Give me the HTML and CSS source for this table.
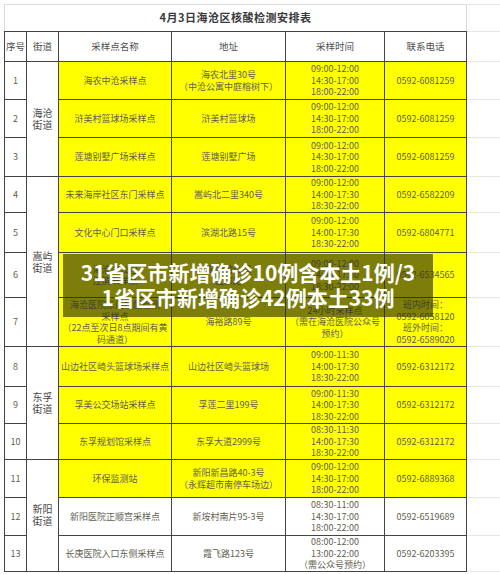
FILE: index.html
```html
<!DOCTYPE html>
<html lang="zh">
<head>
<meta charset="utf-8">
<link rel="stylesheet" href="styles.css">
</head>
<body>
<div class="page">
<table class="sheet">
<colgroup>
<col class="c-no"><col class="c-st"><col class="c-name"><col class="c-addr"><col class="c-time"><col class="c-tel"><col class="c-extra">
</colgroup>
<tr class="r-title"><td colspan="6" class="title">4月3日海沧区核酸检测安排表</td><td class="extra"></td></tr>
<tr class="r-head"><td>序号</td><td>街道</td><td>采样点名称</td><td>地址</td><td>采样时间</td><td>联系电话</td><td class="extra"></td></tr>
<tr class="h38"><td>1</td><td rowspan="3" class="st">海沧<br>街道</td><td class="y">海农中沧采样点</td><td class="y">海农北里30号<br>（中沧公寓中庭榕树下）</td><td class="y">09:00-12:00<br>14:30-17:00<br>18:00-22:00</td><td class="y">0592-6081259</td><td class="extra"></td></tr>
<tr class="h38"><td>2</td><td class="y">浒美村篮球场采样点</td><td class="y">浒美村篮球场</td><td class="y">09:00-12:00<br>14:30-17:00<br>18:00-22:00</td><td class="y">0592-6081259</td><td class="extra"></td></tr>
<tr class="h39"><td>3</td><td class="y">莲塘别墅广场采样点</td><td class="y">莲塘别墅广场</td><td class="y">09:00-12:00<br>14:30-17:00<br>18:00-22:00</td><td class="y">0592-6081259</td><td class="extra"></td></tr>
<tr class="h36"><td>4</td><td rowspan="4" class="st">嵩屿<br>街道</td><td class="y">未来海岸社区东门采样点</td><td class="y">嵩屿北二里340号</td><td class="y">09:00-12:00<br>14:00-17:30<br>18:30-22:00</td><td class="y">0592-6582209</td><td class="extra"></td></tr>
<tr class="h40"><td>5</td><td class="y">文化中心门口采样点</td><td class="y">滨湖北路15号</td><td class="y">09:00-12:00<br>14:00-17:30<br>18:30-22:00</td><td class="y">0592-6804771</td><td class="extra"></td></tr>
<tr class="h45"><td>6</td><td class="y">海沧湾公园<br>江滨采样点</td><td class="y">海沧湾公园<br>江滨路</td><td class="y">09:00-12:00<br>14:00-17:30<br>18:30-22:00</td><td class="y">0592-6534565</td><td class="extra"></td></tr>
<tr class="h49"><td>7</td><td class="y">海沧医院东门核酸检测<br>采样点<br>（22点至次日8点期间有黄<br>码通道）</td><td class="y">海裕路89号</td><td class="y">24小时采样点<br>（需在海沧医院公众号<br>预约）</td><td class="y">班内时间：<br>0592-6058120<br>班外时间：<br>0592-6589020</td><td class="extra"></td></tr>
<tr class="h40"><td>8</td><td rowspan="3" class="st">东孚<br>街道</td><td class="y">山边社区崎头篮球场采样点</td><td class="y">山边社区崎头篮球场</td><td class="y">09:00-11:30<br>14:00-17:30<br>18:30-22:00</td><td class="y">0592-6312172</td><td class="extra"></td></tr>
<tr class="h37"><td>9</td><td class="y">孚美公交场站采样点</td><td class="y">孚莲二里199号</td><td class="y">09:00-11:30<br>14:00-17:30<br>18:30-22:00</td><td class="y">0592-6312172</td><td class="extra"></td></tr>
<tr class="h36"><td>10</td><td class="y">东孚规划馆采样点</td><td class="y">东孚大道2999号</td><td class="y">08:30-11:30<br>14:00-17:30<br>18:30-22:00</td><td class="y">0592-6312172</td><td class="extra"></td></tr>
<tr class="h38"><td>11</td><td rowspan="3" class="st">新阳<br>街道</td><td class="y">环保监测站</td><td class="y">新阳新昌路40-3号<br>（永辉超市南停车场边）</td><td class="y">09:00-12:00<br>14:30-17:00<br>18:00-22:00</td><td class="y">0592-6889368</td><td class="extra"></td></tr>
<tr class="h38"><td>12</td><td>新阳医院正顺宫采样点</td><td>新垵村南片95-3号</td><td>08:30-11:00<br>14:30-17:00<br>18:00-22:00</td><td>0592-6519689</td><td class="extra"></td></tr>
<tr class="h35"><td>13</td><td>长庚医院入口东侧采样点</td><td>霞飞路123号</td><td>08:00-12:00<br>13:00-22:00<br>（需公众号预约）</td><td>0592-6203395</td><td class="extra"></td></tr>
</table>
<div class="banner">31省区市新增确诊10例含本土1例/3<br>1省区市新增确诊42例本土33例</div>
</div>
</body>
</html>
```
FILE: styles.css
```css
html, body {
  margin: 0;
  padding: 0;
  background: #fff;
}
.page {
  position: relative;
  width: 500px;
  height: 574px;
  padding: 4px 0 0 4px;
  box-sizing: border-box;
  overflow: hidden;
  font-family: "Noto Sans CJK SC", "Noto Sans", sans-serif;
}
.sheet {
  border-collapse: collapse;
  table-layout: fixed;
  width: 497px;
}
.c-no { width: 22px; }
.c-st { width: 32px; }
.c-name { width: 113px; }
.c-addr { width: 114px; }
.c-time { width: 99px; }
.c-tel { width: 82px; }
.c-extra { width: 35px; }
.sheet td {
  border: 1px solid #444;
  padding: 0;
  text-align: center;
  vertical-align: middle;
  font-size: 9px;
  line-height: 11.5px;
  color: #5f5f50;
  white-space: nowrap;
  overflow: hidden;
}
.sheet td.y {
  background: #ffff00;
}
.sheet td.extra {
  border: none;
  border-left: 1px solid #444;
  border-bottom: 1px solid #e6e6e6;
}
.r-title td {
  height: 26px;
}
.sheet .r-title td.title {
  border: 1px solid #dcdcdc;
  border-bottom: 1px solid #444;
  font-size: 11px;
  font-weight: 700;
  color: #3a3a3a;
  letter-spacing: 0.5px;
}
.sheet .r-title td.extra {
  border-left: 1px solid #dcdcdc;
  border-top: 1px solid #e6e6e6;
}
.r-head td {
  height: 29px;
  font-size: 9.5px;
  color: #4f4f4f;
}
.sheet td.st {
  font-size: 10px;
  line-height: 12px;
  color: #4a4a4a;
}
.h35 td { height: 34px; }
.h36 td { height: 35px; }
.h37 td { height: 36px; }
.h38 td { height: 37px; }
.h39 td { height: 38px; }
.h40 td { height: 39px; }
.h45 td { height: 44px; }
.h49 td { height: 48px; }
.banner {
  position: absolute;
  left: 63px;
  top: 254px;
  width: 370px;
  height: 63px;
  box-sizing: border-box;
  padding-top: 6px;
  background: rgba(45, 45, 15, 0.62);
  color: #fff;
  font-weight: 700;
  font-size: 21px;
  line-height: 25px;
  text-align: center;
  white-space: nowrap;
}
```
